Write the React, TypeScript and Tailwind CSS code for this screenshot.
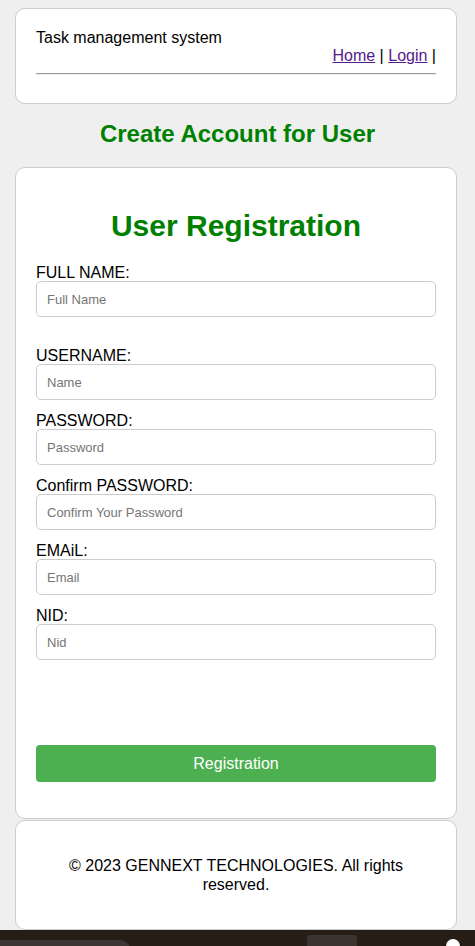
import { useState } from "react"

const fields = [
  { id: "fullname", label: "FULL NAME:", placeholder: "Full Name", type: "text", gapAfter: true },
  { id: "username", label: "USERNAME:", placeholder: "Name", type: "text" },
  { id: "password", label: "PASSWORD:", placeholder: "Password", type: "password" },
  { id: "confirm", label: "Confirm PASSWORD:", placeholder: "Confirm Your Password", type: "password" },
  { id: "email", label: "EMAiL:", placeholder: "Email", type: "email" },
  { id: "nid", label: "NID:", placeholder: "Nid", type: "text" },
]

export default function App() {
  const [form, setForm] = useState<Record<string, string>>({})

  return (
    <div className="min-h-[946px] bg-[#efefef] text-black font-['Liberation_Sans',Arial,sans-serif] flex flex-col">
      {/* header */}
      <div className="mx-[15px] mt-[8px] w-[442px] bg-white border border-[#cccccc] rounded-[10px] px-[20px] pt-[20px] pb-[20px]">
        <div className="text-[16px] leading-[18px]">Task management system</div>
        <div className="text-right text-[16px] leading-[18px]">
          <a href="#" className="text-[#551a8b] underline">Home</a> |{" "}
          <a href="#" className="text-[#551a8b] underline">Login</a> |
        </div>
        <div className="mt-[8px] mb-[8px] h-[2px] border-t border-[#9a9a9a] border-b border-b-[#eeeeee]" />
      </div>

      <h2 className="text-center text-[24px] font-bold text-[#008000] leading-[28px] mt-[16px] mb-[19px]">
        Create Account for User
      </h2>

      {/* form card */}
      <div className="mx-[15px] w-[442px] h-[652px] bg-white border border-[#cccccc] rounded-[10px] px-[20px] pt-[20px]">
        <h1 className="text-center text-[30px] font-bold text-[#008000] leading-[34px] mt-[21px] mb-[19px]">
          User Registration
        </h1>
        <form onSubmit={(e) => e.preventDefault()}>
          {fields.map((f) => (
            <div key={f.id} className={f.gapAfter ? "mb-[28px]" : "mb-[10px]"}>
              <label htmlFor={f.id} className="block pt-[3px] text-[16px] leading-[16px]">
                {f.label}
              </label>
              <input
                id={f.id}
                type={f.type}
                placeholder={f.placeholder}
                value={form[f.id] || ""}
                onChange={(e) => setForm({ ...form, [f.id]: e.target.value })}
                className="block w-full h-[36px] px-[10px] text-[13px] border border-[#cccccc] rounded-[5px] placeholder:text-[#757575] outline-none"
              />
            </div>
          ))}
          <button
            type="submit"
            className="w-full h-[37px] mt-[75px] bg-[#4caf50] text-white text-[16px] rounded-[4px]"
          >
            Registration
          </button>
        </form>
      </div>

      {/* footer */}
      <div className="mx-[15px] mt-[1px] w-[442px] h-[110px] bg-white border border-[#cccccc] rounded-[10px] px-[20px] flex items-center justify-center">
        <p className="text-center text-[16px] leading-[19px]">
          © 2023 GENNEXT TECHNOLOGIES. All rights reserved.
        </p>
      </div>

      {/* bottom bar */}
      <div className="mt-auto h-[16px] bg-[#271d17] relative overflow-hidden">
        <div className="absolute left-0 top-[10px] w-[130px] h-[14px] rounded-tr-[10px] bg-[#3b3633]" />
        <div className="absolute left-[307px] top-[5px] w-[50px] h-[14px] rounded-[3px] bg-[#3a3330]" />
        <div className="absolute left-[446px] top-[9px] w-[14px] h-[14px] rounded-full bg-white" />
      </div>
    </div>
  )
}
